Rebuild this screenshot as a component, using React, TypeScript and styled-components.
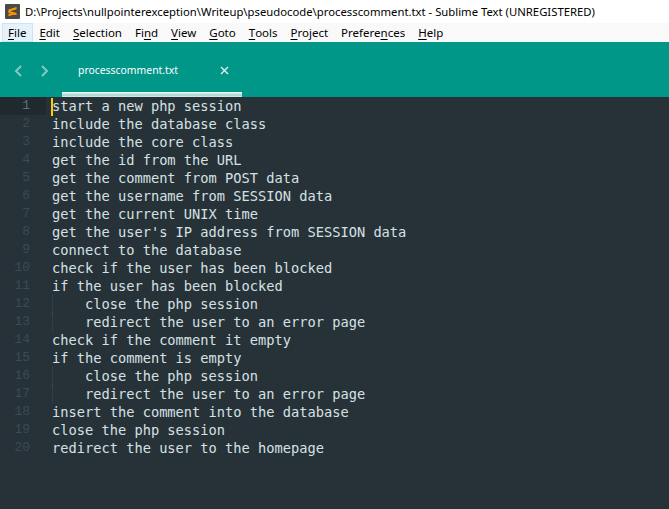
import React from "react";
import styled, { createGlobalStyle } from "styled-components";

const Global = createGlobalStyle`
  html, body { margin: 0; padding: 0; background: #263238; overflow: hidden; }
  #root { width: 669px; height: 509px; }
`;

const Window = styled.div`
  width: 669px;
  height: 509px;
  display: flex;
  flex-direction: column;
  background: #263238;
`;

const TitleBar = styled.div`
  height: 23px;
  display: flex;
  align-items: center;
  background: #ffffff;
  padding-left: 5px;
  gap: 5px;
  font-family: "Noto Sans", "Open Sans", sans-serif;
  font-size: 11.3px;
  color: #000;
`;

const TitleText = styled.span`
  line-height: 23px;
`;

const MenuBar = styled.div`
  height: 19px;
  display: flex;
  align-items: stretch;
  background: #f9f9f9;
  padding-left: 2px;
  font-family: "Noto Sans", "Open Sans", sans-serif;
  font-size: 11.5px;
  color: #000;
`;

const MenuItem = styled.div<{ $active?: boolean }>`
  display: flex;
  align-items: center;
  padding: 0 6px 0 5px;
  box-sizing: border-box;
  border: 1px solid ${(p) => (p.$active ? "#cce4f7" : "transparent")};
  background: ${(p) => (p.$active ? "#e5f1fb" : "transparent")};
  u { text-decoration: underline; text-underline-offset: 2px; }
`;

const TabBar = styled.div`
  height: 55px;
  background: #009688;
  display: flex;
  align-items: stretch;
`;

const Nav = styled.div`
  width: 62px;
  display: flex;
  align-items: center;
  justify-content: flex-start;
  padding-left: 14px;
  padding-top: 2px;
  gap: 15px;
  box-sizing: border-box;
`;

const Tab = styled.div`
  width: 180px;
  position: relative;
  display: flex;
  align-items: center;
  justify-content: space-between;
  padding: 1px 13px 0 16px;
  box-sizing: border-box;
  font-family: "Noto Sans", "Open Sans", sans-serif;
  font-size: 10.4px;
  color: #ffffff;
  &::after {
    content: "";
    position: absolute;
    left: 0;
    right: 0;
    bottom: 0;
    height: 5px;
    background: linear-gradient(#ffffff, #9fd6cf 60%, #d9eeeb);
  }
`;

const Editor = styled.div`
  flex: 1;
  display: flex;
  background: #263238;
  font-family: "DejaVu Sans Mono", "Liberation Mono", monospace;
  font-size: 13.7px;
`;

const Gutter = styled.div`
  width: 46px;
  display: flex;
  flex-direction: column;
`;

const LineNo = styled.div<{ $current?: boolean }>`
  height: 18px;
  line-height: 18px;
  text-align: right;
  padding-right: 16px;
  color: ${(p) => (p.$current ? "#5d737c" : "#3a4b53")};
  background: ${(p) => (p.$current ? "#1f292e" : "transparent")};
  font-family: "Liberation Mono", monospace;
  font-size: 13px;
`;

const Code = styled.div`
  flex: 1;
  padding-left: 6px;
  display: flex;
  flex-direction: column;
`;

const Line = styled.div<{ $indent?: boolean; $cursor?: boolean }>`
  height: 18px;
  line-height: 18px;
  white-space: pre;
  color: #d6e0e3;
  position: relative;
  ${(p) =>
    p.$indent
      ? `&::before { content: ""; position: absolute; left: 0; top: 0; bottom: 0; border-left: 1px dotted #3a4a52; }`
      : ""}
  ${(p) =>
    p.$cursor
      ? `&::after { content: ""; position: absolute; left: -1px; top: 1px; height: 18px; width: 2px; background: #ffcc00; }`
      : ""}
`;

const lines = [
  "start a new php session",
  "include the database class",
  "include the core class",
  "get the id from the URL",
  "get the comment from POST data",
  "get the username from SESSION data",
  "get the current UNIX time",
  "get the user's IP address from SESSION data",
  "connect to the database",
  "check if the user has been blocked",
  "if the user has been blocked",
  "    close the php session",
  "    redirect the user to an error page",
  "check if the comment it empty",
  "if the comment is empty",
  "    close the php session",
  "    redirect the user to an error page",
  "insert the comment into the database",
  "close the php session",
  "redirect the user to the homepage",
];

const Logo = () => (
  <svg width="15" height="15" viewBox="0 0 15 15">
    <rect width="15" height="15" rx="1" fill="#4a4a4a" />
    <path d="M3.5 5.5 L11.5 3 V5.2 L3.5 7.7 Z" fill="#ff9800" />
    <path d="M3.5 6.8 L11.5 9 V11.2 L3.5 9 Z" fill="#ff9800" />
    <path d="M3.5 9.8 L11.5 9.8 L3.5 12.2 Z" fill="#ff9800" />
  </svg>
);

const Chevron = ({ dir }: { dir: "l" | "r" }) => (
  <svg width="10" height="14" viewBox="0 0 10 14">
    <path
      d={dir === "l" ? "M7 2 L2 7 L7 12" : "M3 2 L8 7 L3 12"}
      stroke="#7fcbc2"
      strokeWidth="2"
      fill="none"
    />
  </svg>
);

const Close = () => (
  <svg width="9" height="9" viewBox="0 0 9 9">
    <path d="M1 1 L8 8 M8 1 L1 8" stroke="#e6f5f3" strokeWidth="1.3" />
  </svg>
);

const menus: [string, string][] = [
  ["F", "ile"],
  ["E", "dit"],
  ["S", "election"],
  ["Fi", "nd"],
  ["V", "iew"],
  ["G", "oto"],
  ["T", "ools"],
  ["P", "roject"],
  ["Prefere", "nces"],
  ["H", "elp"],
];

export default function App() {
  return (
    <Window>
      <Global />
      <TitleBar>
        <Logo />
        <TitleText>
          D:\Projects\nullpointerexception\Writeup\pseudocode\processcomment.txt - Sublime Text (UNREGISTERED)
        </TitleText>
      </TitleBar>
      <MenuBar>
        {menus.map(([a, b], i) => {
          let content: React.ReactNode;
          if (a === "Fi") content = (<>Fi<u>n</u>d</>);
          else if (a === "Prefere") content = (<>Prefere<u>n</u>ces</>);
          else content = (<><u>{a}</u>{b}</>);
          return (
            <MenuItem key={i} $active={i === 0}>
              {content}
            </MenuItem>
          );
        })}
      </MenuBar>
      <TabBar>
        <Nav>
          <Chevron dir="l" />
          <Chevron dir="r" />
        </Nav>
        <Tab>
          <span>processcomment.txt</span>
          <Close />
        </Tab>
      </TabBar>
      <Editor>
        <Gutter>
          {lines.map((_, i) => (
            <LineNo key={i} $current={i === 0}>
              {i + 1}
            </LineNo>
          ))}
        </Gutter>
        <Code>
          {lines.map((l, i) => (
            <Line key={i} $indent={l.startsWith("    ")} $cursor={i === 0}>
              {l}
            </Line>
          ))}
        </Code>
      </Editor>
    </Window>
  );
}
